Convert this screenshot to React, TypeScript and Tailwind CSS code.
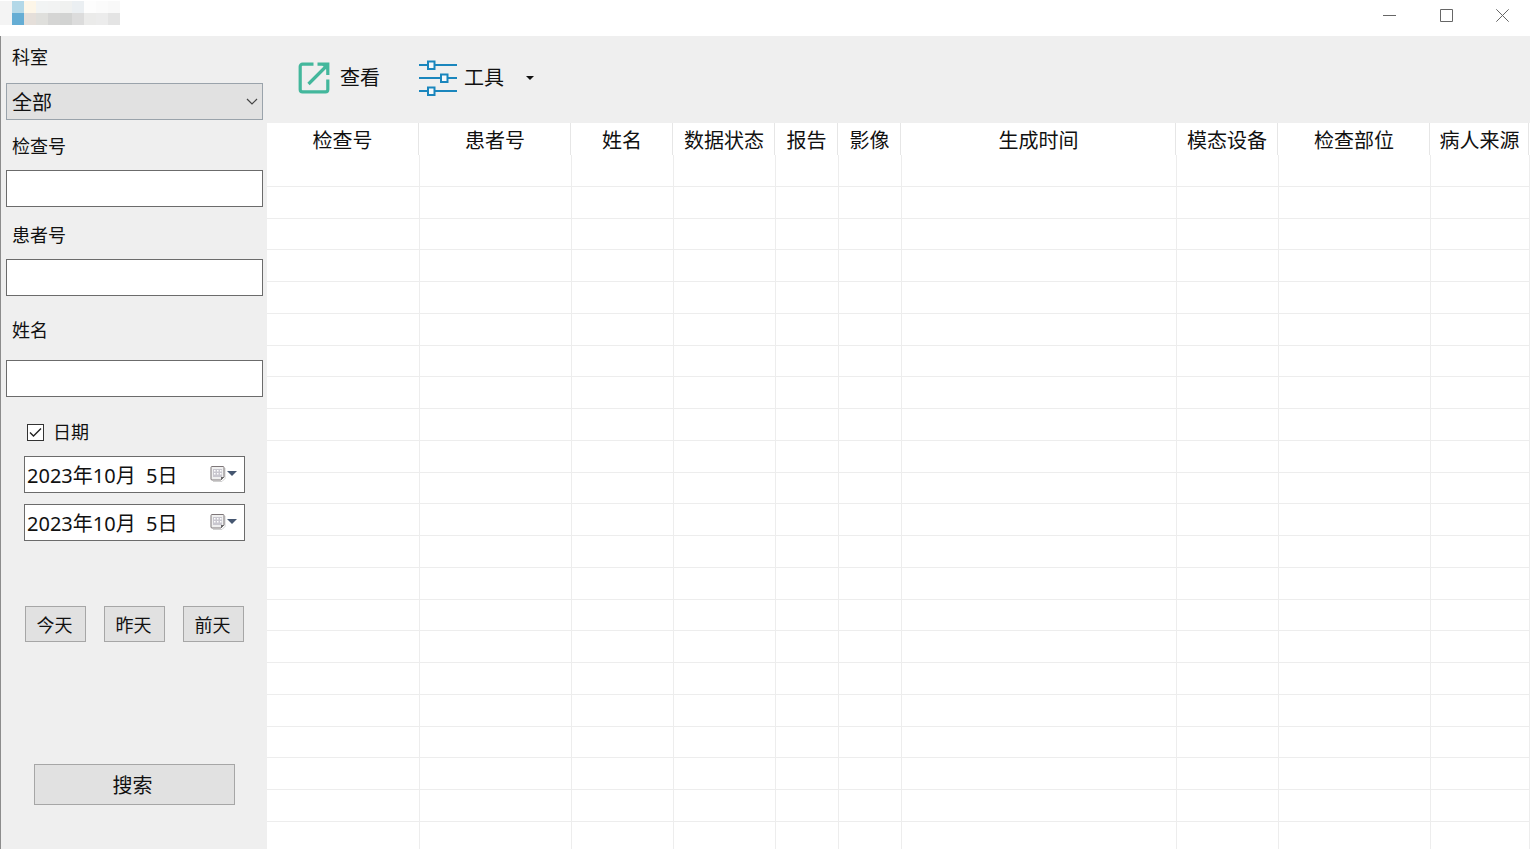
import React, { useState } from 'react';

const columns = [
  { title: '检查号', width: 'w-[153px]' },
  { title: '患者号', width: 'w-[152px]' },
  { title: '姓名', width: 'w-[102px]' },
  { title: '数据状态', width: 'w-[102px]' },
  { title: '报告', width: 'w-[63px]' },
  { title: '影像', width: 'w-[63px]' },
  { title: '生成时间', width: 'w-auto' },
  { title: '模态设备', width: 'w-[102px]' },
  { title: '检查部位', width: 'w-[152px]' },
  { title: '病人来源', width: 'w-[99px]' },
];

const rows = Array.from({ length: 22 }, (_, i) => i);

const swatches = [
  'bg-[#f4f4f4]', 'bg-[#b3d8e8]', 'bg-[#fdf6e8]', 'bg-[#f2f4f4]', 'bg-[#f2f3f3]', 'bg-[#f0f1f0]', 'bg-[#ebeff2]', 'bg-[#fdfdfd]', 'bg-[#fbfbfb]', 'bg-[#f9f9f9]',
  'bg-[#f4f4f4]', 'bg-[#65add4]', 'bg-[#e5dfda]', 'bg-[#dfdfdc]', 'bg-[#d5d5d4]', 'bg-[#d2d3d2]', 'bg-[#dcdcdc]', 'bg-[#ebebea]', 'bg-[#ececec]', 'bg-[#e4e4e4]',
];

function TitleBar() {
  return (
    <header className="flex h-9 shrink-0 items-start justify-between bg-white">
      <div className="grid grid-cols-10 pt-px" aria-hidden="true">
        {swatches.map((color, i) => (
          <span key={i} className={`size-3 ${color}`} />
        ))}
      </div>
      <div className="flex h-[31px] text-[#666]">
        <button type="button" aria-label="最小化" className="flex w-14 items-center justify-center">
          <svg width="13" height="13" viewBox="0 0 13 13" stroke="currentColor" fill="none">
            <path d="M0 6.5h13" />
          </svg>
        </button>
        <button type="button" aria-label="最大化" className="flex w-[58px] items-center justify-center">
          <svg width="13" height="13" viewBox="0 0 13 13" stroke="currentColor" fill="none">
            <path d="M.5 .5h12v12h-12z" />
          </svg>
        </button>
        <button type="button" aria-label="关闭" className="flex w-[55px] items-center justify-center">
          <svg width="13" height="13" viewBox="0 0 13 13" stroke="currentColor" fill="none">
            <path d="M.3 .3l12.4 12.4M12.7 .3L.3 12.7" />
          </svg>
        </button>
      </div>
    </header>
  );
}

function TextField({ id, label, className }: { id: string; label: string; className: string }) {
  return (
    <div className={`flex flex-col ${className}`}>
      <label htmlFor={id} className="pl-[6px] text-lg leading-6">{label}</label>
      <input id={id} type="text" className="h-[37px] w-full border border-[#6b6b6b] bg-white px-1 text-xl outline-none" />
    </div>
  );
}

function DateField({ label }: { label: string }) {
  const [value, setValue] = useState('2023年10月  5日');
  return (
    <div className="flex h-[37px] items-center border border-[#6b6b6b] bg-white">
      <input
        type="text"
        aria-label={label}
        value={value}
        onChange={(e) => setValue(e.target.value)}
        className="h-full min-w-0 flex-1 bg-transparent pl-[2px] text-xl outline-none"
      />
      <button type="button" aria-label={`选择${label}`} className="flex h-full w-[34px] items-center pb-px">
        <svg width="28" height="18" viewBox="0 0 28 18" fill="none">
          <path d="M3 16.5h9l3-3V3" stroke="#d0d0d0" />
          <path d="M2 1.500h11a1 1 0 0 1 1 1V12l-3 3H2a1 1 0 0 1-1-1V2.500a1 1 0 0 1 1-1z" fill="#f0f0f0" stroke="#7d7678" />
          <path d="M3 4h9v8H3z" fill="#c9c7cf" />
          <path d="M4 5h1.500v1.500H4zM7 5h1.500v1.500H7zM10 5h1.500v1.500H10zM4 8h1.500v1.500H4zM7 8h1.500v1.500H7zM10 8h1.500v1.500H10z" fill="#fff" />
          <path d="M11 15v-3h3z" fill="#666" />
          <path d="M17 6h10l-5 5z" fill="#455670" />
        </svg>
      </button>
    </div>
  );
}

function Sidebar() {
  const [checked, setChecked] = useState(true);
  return (
    <form className="flex w-[267px] shrink-0 flex-col border-l border-[#8c8c8c] bg-[#efefef] pl-[5px] pr-1 pt-[9px]" onSubmit={(e) => e.preventDefault()}>
      <div className="flex flex-col gap-[14px]">
        <label htmlFor="department" className="pl-[6px] text-lg leading-6">科室</label>
        <div className="relative">
          <select id="department" className="h-[37px] w-full appearance-none border border-[#9aa3ab] bg-[#e1e1e1] pl-[5px] pt-[2px] text-xl outline-none">
            <option>全部</option>
          </select>
          <svg className="pointer-events-none absolute right-[5px] top-[15px]" width="12" height="8" viewBox="0 0 12 8" fill="none" stroke="#444" strokeWidth="1.2">
            <path d="M1 1l5 5 5-5" />
          </svg>
        </div>
      </div>

      <TextField id="exam-no" label="检查号" className="mt-[14px] gap-3" />
      <TextField id="patient-no" label="患者号" className="mt-4 gap-3" />
      <TextField id="patient-name" label="姓名" className="mt-[22px] gap-[18px]" />

      <div className="mx-[18px] mt-[23px] flex flex-col">
        <label className="ml-[3px] flex items-center gap-[9px] self-start text-lg leading-6">
          <span className="relative flex">
            <input
              type="checkbox"
              checked={checked}
              onChange={(e) => setChecked(e.target.checked)}
              className="size-[17px] appearance-none border border-[#333] bg-white"
            />
            {checked && (
              <svg className="pointer-events-none absolute left-0 top-0" width="17" height="17" viewBox="0 0 17 17" fill="none" stroke="#222" strokeWidth="1.4">
                <path d="M3 8.500l3.500 3.500 7.500-7.500" />
              </svg>
            )}
          </span>
          日期
        </label>
        <div className="mt-3 flex flex-col gap-[11px]">
          <DateField label="开始日期" />
          <DateField label="结束日期" />
        </div>
      </div>

      <div className="ml-[19px] mt-[65px] flex gap-[18px]">
        {['今天', '昨天', '前天'].map((day) => (
          <button key={day} type="button" className="h-9 w-[61px] border border-[#a6a6a6] bg-[#e1e1e1] pr-[2px] pt-[2px] text-lg leading-6">
            {day}
          </button>
        ))}
      </div>

      <button type="submit" className="mx-7 mt-[122px] h-[41px] shrink-0 border border-[#a6a6a6] bg-[#e1e1e1] pr-1 pt-[2px] text-xl">
        搜索
      </button>
    </form>
  );
}

function Toolbar() {
  return (
    <div className="flex h-[87px] shrink-0 items-center bg-[#efefef] pb-1 pl-[31px] text-xl">
      <button type="button" className="flex items-center gap-[10px]">
        <svg width="32" height="32" viewBox="0 0 32 32" fill="none" stroke="#43b79c" strokeWidth="3.200">
          <path d="M15.500 2.200H4.500a2.300 2.300 0 0 0-2.300 2.300v23a2.300 2.300 0 0 0 2.300 2.300h23a2.300 2.300 0 0 0 2.300-2.300V17.500" />
          <path d="M10.500 22L29 3.500" />
          <path d="M19.500 2.200h10.300V13" />
          <path d="M23 2h7v7z" fill="#43b79c" stroke="none" />
        </svg>
        查看
      </button>
      <button type="button" className="ml-[39px] flex items-center">
        <svg width="38" height="36" viewBox="0 0 38 36" fill="none" stroke="#1a86bd" strokeWidth="2">
          <path d="M0 5h8.500M16 5h22M0 18h21.500M29 18h9M0 31h8.500M16 31h22" />
          <path d="M9 1.500h6.500v7.500H9zM22 14.500h6.500v7.500H22zM9 27.500h6.500v7.500H9z" fill="#f6f9fb" />
        </svg>
        <span className="ml-[7px]">工具</span>
        <svg className="ml-[22px]" width="8" height="4" viewBox="0 0 8 4">
          <path d="M0 0h8L4 4z" fill="#111" />
        </svg>
      </button>
    </div>
  );
}

function StudyTable() {
  return (
    <div className="min-h-0 flex-1 overflow-hidden bg-white">
      <table className="w-full table-fixed border-separate border-spacing-0">
        <colgroup>
          {columns.map((c) => (
            <col key={c.title} className={c.width} />
          ))}
        </colgroup>
        <thead>
          <tr>
            {columns.map((c) => (
              <th key={c.title} scope="col" className="p-0 pr-px font-normal">
                <div className="h-8 whitespace-nowrap border-r border-[#e6e6e6] pt-[2px] text-center text-xl leading-8">{c.title}</div>
              </th>
            ))}
          </tr>
        </thead>
        <tbody>
          {rows.map((r) => (
            <tr key={r} className="h-8 nth-[4n+3]:h-[31px]">
              {columns.map((c) => (
                <td key={c.title} className="border-b border-r border-[#ededed] p-0" />
              ))}
            </tr>
          ))}
        </tbody>
      </table>
    </div>
  );
}

export default function App() {
  return (
    <div className="flex h-screen flex-col overflow-hidden bg-white font-['Noto_Sans','Noto_Sans_CJK_SC',sans-serif] text-[#111]">
      <TitleBar />
      <div className="flex min-h-0 flex-1">
        <Sidebar />
        <main className="flex min-w-0 flex-1 flex-col">
          <Toolbar />
          <StudyTable />
        </main>
      </div>
    </div>
  );
}
